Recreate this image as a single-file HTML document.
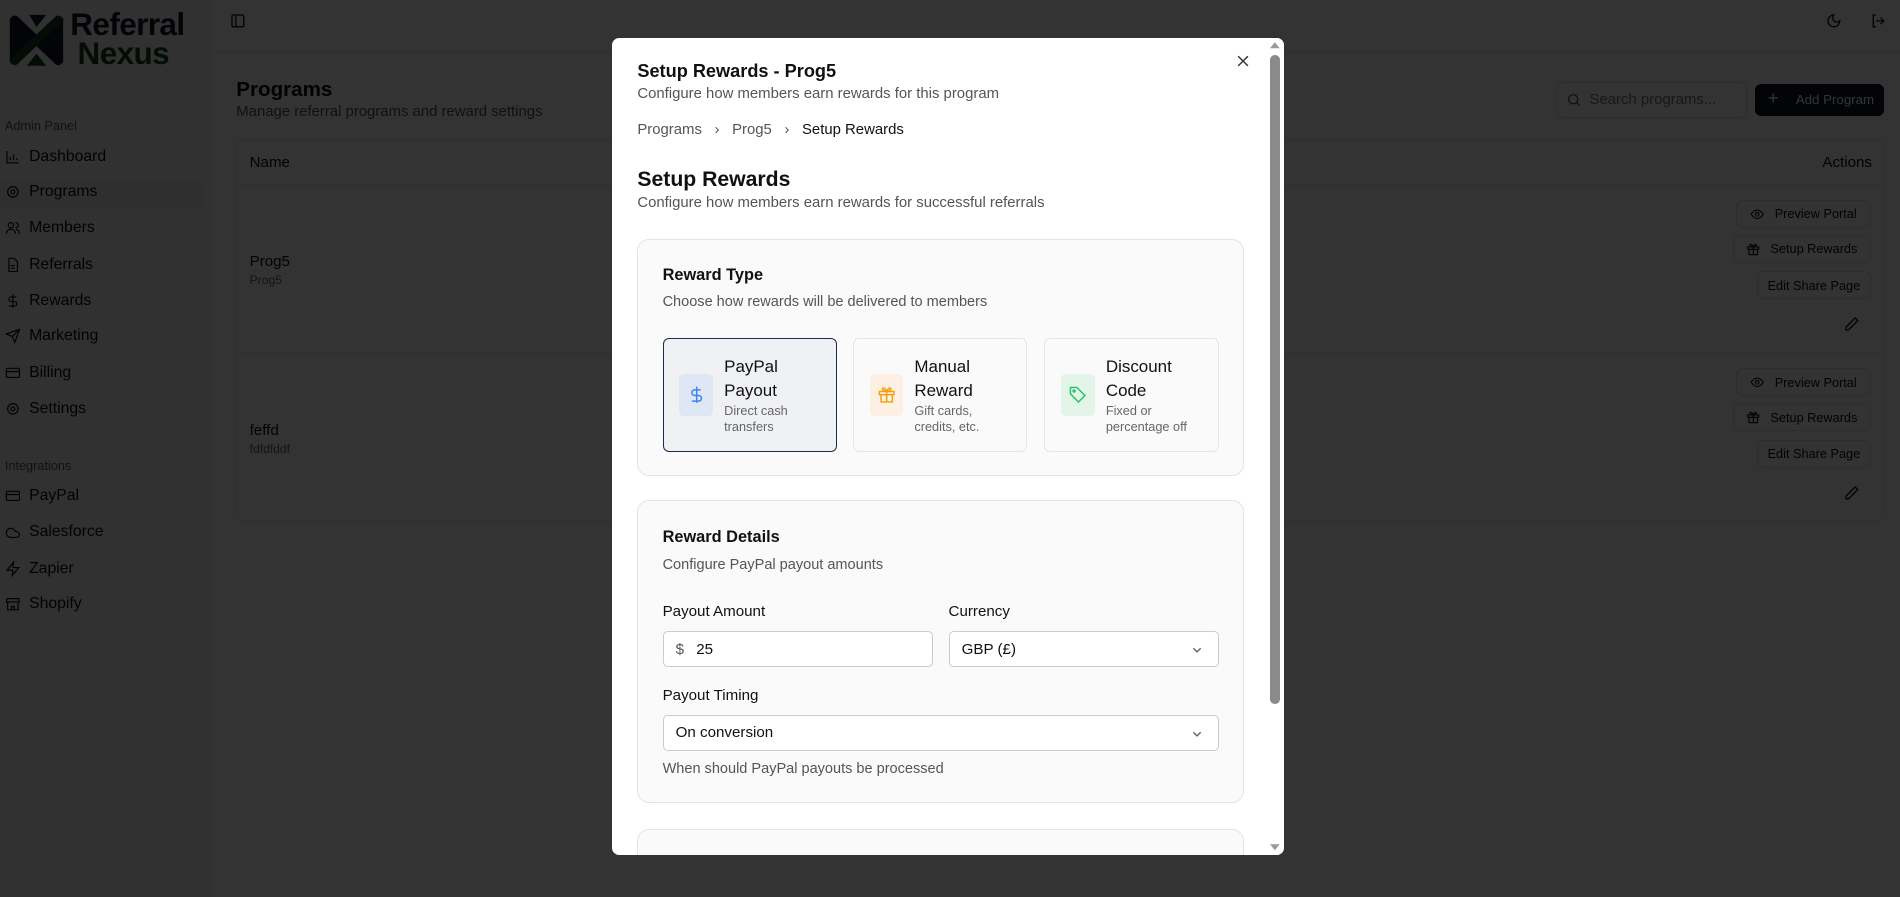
<!DOCTYPE html>
<html><head><meta charset="utf-8">
<meta name="color-scheme" content="only light">
<style>
:root{color-scheme:only light}
*{box-sizing:border-box;margin:0;padding:0}
html,body{width:1900px;height:897px;overflow:hidden;background:#fff}
body{font-family:"Liberation Sans",sans-serif}
#w{zoom:1.2117;width:1568px;height:740px;position:relative;background:#fff;color:#0a0a0a}
.abs{position:absolute}
.side{left:0;top:0;width:175px;height:740px;background:#f6f6f6;border-right:1px solid #ececec}
.nav{position:absolute;left:4px;font-size:13px;color:#0a0a0a;display:flex;align-items:center;gap:7px}
.nav svg{width:13px;height:13px;stroke:#0a0a0a;fill:none;stroke-width:1.8}
.grp{position:absolute;left:4px;font-size:10.5px;color:#555}
.btn{position:absolute;border:1px solid #e2e2e2;border-radius:5px;font-size:10.5px;color:#0a0a0a;display:flex;align-items:center;justify-content:center;gap:8px;height:23px;background:#fff}
.btn svg{width:12px;height:12px;stroke:#0a0a0a;fill:none;stroke-width:1.8}
.ov{left:0;top:0;width:1568px;height:740px;background:rgba(0,0,0,0.8)}
.modal{left:505px;top:31px;width:555px;height:675px;background:#fff;border-radius:6px;overflow:hidden}
.card{position:absolute;left:21px;width:501px;background:#fafafa;border:1px solid #e4e4e4;border-radius:10px}
.opt{position:absolute;top:81px;width:144px;height:94px;border:1px solid #e6e6e6;border-radius:5px;background:#fafafa}
.opt .ic{position:absolute;left:13px;top:29px;width:28px;height:35px;border-radius:4px;display:flex;align-items:center;justify-content:center}
.opt .ic svg{width:16px;height:16px;fill:none;stroke-width:1.8}
.opt .t{position:absolute;left:50px;top:13px;font-size:14px;line-height:20px;color:#111}
.opt .d{position:absolute;left:50px;top:53px;font-size:10.5px;line-height:13.5px;color:#666}
.lbl{position:absolute;font-size:12.5px;color:#111}
.inp{position:absolute;height:30px;border:1px solid #ccc;border-radius:4px;background:#fff;font-size:12.5px;color:#111;display:flex;align-items:center;padding-left:10px}
.chev{position:absolute;right:12px;top:10px;width:10px;height:10px}
</style></head><body><div id="w">

<div class="abs side">
 <svg class="abs" style="left:4px;top:8px" width="52" height="50" viewBox="0 0 52 50">
  <path d="M4 6 L22 24 L4 44 Z" fill="#0b1424"/><path d="M48 6 L30 24 L48 44 Z" fill="#0b1424"/>
  <line x1="8" y1="8" x2="44" y2="42" stroke="#0b1424" stroke-width="7" stroke-linecap="round"/>
  <line x1="44" y1="8" x2="8" y2="42" stroke="#14401c" stroke-width="7" stroke-linecap="round"/>
  <path d="M20 4 L34 4 L26 14Z" fill="#0b1424"/><path d="M18 46 L34 46 L26 36Z" fill="#14401c"/>
 </svg>
 <div class="abs" style="left:58px;top:8px;font-size:26px;font-weight:bold;line-height:24px;color:#0b1424;letter-spacing:-0.5px">Referral</div>
 <div class="abs" style="left:64px;top:32px;font-size:26px;font-weight:bold;line-height:24px;color:#14401c;letter-spacing:-0.5px">Nexus</div>
 <div class="abs" style="left:0;top:78px;width:175px;border-top:1px solid #e8e8e8"></div>
 <div class="grp" style="top:97px">Admin Panel</div>
 <div class="abs" style="left:0;top:148px;width:168px;height:23px;background:#ebebeb;border-radius:5px"></div>
 <div class="nav" style="top:122px"><svg viewBox="0 0 24 24"><path d="M3 3v18h18M8 17v-5M13 17V8M18 17v-3"/></svg>Dashboard</div>
 <div class="nav" style="top:151px"><svg viewBox="0 0 24 24"><circle cx="12" cy="12" r="3"/><circle cx="12" cy="12" r="8"/></svg>Programs</div>
 <div class="nav" style="top:181px"><svg viewBox="0 0 24 24"><circle cx="9" cy="8" r="4"/><path d="M2 21c0-4 3-7 7-7s7 3 7 7M16 4a4 4 0 010 8M22 21c0-3-2-6-5-7"/></svg>Members</div>
 <div class="nav" style="top:211px"><svg viewBox="0 0 24 24"><path d="M6 2h8l5 5v15H6zM9 13h6M9 17h6"/></svg>Referrals</div>
 <div class="nav" style="top:241px"><svg viewBox="0 0 24 24"><path d="M12 2v20M17 6H9.5a3.5 3.5 0 000 7h5a3.5 3.5 0 010 7H6"/></svg>Rewards</div>
 <div class="nav" style="top:270px"><svg viewBox="0 0 24 24"><path d="M22 2L11 13M22 2l-7 20-4-9-9-4z"/></svg>Marketing</div>
 <div class="nav" style="top:300px"><svg viewBox="0 0 24 24"><rect x="2" y="5" width="20" height="14" rx="2"/><path d="M2 10h20"/></svg>Billing</div>
 <div class="nav" style="top:330px"><svg viewBox="0 0 24 24"><circle cx="12" cy="12" r="3"/><circle cx="12" cy="12" r="8"/></svg>Settings</div>
 <div class="grp" style="top:378px">Integrations</div>
 <div class="nav" style="top:402px"><svg viewBox="0 0 24 24"><rect x="2" y="5" width="20" height="14" rx="2"/><path d="M2 10h20"/></svg>PayPal</div>
 <div class="nav" style="top:432px"><svg viewBox="0 0 24 24"><path d="M17.5 19H9a7 7 0 116.7-9h1.8a4.5 4.5 0 010 9z"/></svg>Salesforce</div>
 <div class="nav" style="top:462px"><svg viewBox="0 0 24 24"><path d="M13 2L3 14h9l-1 8 10-12h-9z"/></svg>Zapier</div>
 <div class="nav" style="top:491px"><svg viewBox="0 0 24 24"><path d="M4 9h16v12H4zM3 4h18l1 5H2zM10 21v-5h4v5"/></svg>Shopify</div>
</div>

<div class="abs" style="left:176px;top:43px;width:1392px;border-top:1px solid #ececec"></div>
<svg class="abs" style="left:190px;top:11px" width="13" height="13" viewBox="0 0 24 24" fill="none" stroke="#0a0a0a" stroke-width="2"><rect x="3" y="3" width="18" height="18" rx="2"/><path d="M9 3v18"/></svg>
<svg class="abs" style="left:1507px;top:11px" width="13" height="13" viewBox="0 0 24 24" fill="none" stroke="#0a0a0a" stroke-width="2"><path d="M12 3a6 6 0 009 9 9 9 0 11-9-9z"/></svg>
<svg class="abs" style="left:1543px;top:11px" width="13" height="13" viewBox="0 0 24 24" fill="none" stroke="#0a0a0a" stroke-width="2"><path d="M9 21H5V3h4M16 17l5-5-5-5M21 12H9"/></svg>

<div class="abs" style="left:195px;top:64px;font-size:17px;font-weight:bold;color:#0a0a0a">Programs</div>
<div class="abs" style="left:195px;top:86px;font-size:12.3px;color:#555">Manage referral programs and reward settings</div>
<div class="abs" style="left:1284px;top:68px;width:158px;height:29px;border:1px solid #dcdcdc;border-radius:5px;font-size:12.3px;color:#777;padding:7px 0 0 27px">Search programs...</div>
<svg class="abs" style="left:1292px;top:76px" width="13" height="13" viewBox="0 0 24 24" fill="none" stroke="#555" stroke-width="2"><circle cx="11" cy="11" r="7"/><path d="M21 21l-5-5"/></svg>
<div class="abs" style="left:1448px;top:69px;width:107px;height:27px;background:#0f172a;border-radius:5px;font-size:11px;color:#fff;padding:7px 0 0 34px">Add Program</div>
<div class="abs" style="left:1459px;top:73px;font-size:15px;color:#fff">+</div>

<div class="abs" style="left:195px;top:115px;width:1360px;height:316px;border:1px solid #e6e6e6;border-radius:7px"></div>
<div class="abs" style="left:196px;top:153px;width:1358px;border-top:1px solid #e6e6e6"></div>
<div class="abs" style="left:196px;top:291px;width:1358px;border-top:1px solid #e6e6e6"></div>
<div class="abs" style="left:206px;top:127px;font-size:12.5px;color:#0a0a0a">Name</div>
<div class="abs" style="left:1504px;top:127px;font-size:12.5px;color:#0a0a0a">Actions</div>
<div class="abs" style="left:206px;top:209px;font-size:12.5px;color:#0a0a0a">Prog5</div>
<div class="abs" style="left:206px;top:225px;font-size:10px;color:#666">Prog5</div>
<div class="abs" style="left:206px;top:348px;font-size:12.5px;color:#0a0a0a">feffd</div>
<div class="abs" style="left:206px;top:365px;font-size:10px;color:#666">fdfdfddf</div>

<div class="btn" style="left:1433px;top:165px;width:111px"><svg viewBox="0 0 24 24"><path d="M2 12s4-7 10-7 10 7 10 7-4 7-10 7S2 12 2 12z"/><circle cx="12" cy="12" r="3"/></svg>Preview Portal</div>
<div class="btn" style="left:1430px;top:194px;width:114px"><svg viewBox="0 0 24 24"><rect x="3" y="8" width="18" height="4"/><path d="M12 8v13M5 12v9h14v-9M12 8S10 3 7.5 4 9 8 12 8zM12 8s2-5 4.5-4S15 8 12 8z"/></svg>Setup Rewards</div>
<div class="btn" style="left:1450px;top:224px;width:94px">Edit Share Page</div>
<svg class="abs" style="left:1522px;top:261px" width="13" height="13" viewBox="0 0 24 24" fill="none" stroke="#0a0a0a" stroke-width="2"><path d="M17 3l4 4L7 21H3v-4z"/></svg>
<div class="btn" style="left:1433px;top:304px;width:111px"><svg viewBox="0 0 24 24"><path d="M2 12s4-7 10-7 10 7 10 7-4 7-10 7S2 12 2 12z"/><circle cx="12" cy="12" r="3"/></svg>Preview Portal</div>
<div class="btn" style="left:1430px;top:333px;width:114px"><svg viewBox="0 0 24 24"><rect x="3" y="8" width="18" height="4"/><path d="M12 8v13M5 12v9h14v-9M12 8S10 3 7.5 4 9 8 12 8zM12 8s2-5 4.5-4S15 8 12 8z"/></svg>Setup Rewards</div>
<div class="btn" style="left:1450px;top:363px;width:94px">Edit Share Page</div>
<svg class="abs" style="left:1522px;top:400px" width="13" height="13" viewBox="0 0 24 24" fill="none" stroke="#0a0a0a" stroke-width="2"><path d="M17 3l4 4L7 21H3v-4z"/></svg>

<div class="abs ov"></div>

<div class="abs modal">
 <div class="abs" style="left:21px;top:19px;font-size:15px;font-weight:bold;color:#111">Setup Rewards - Prog5</div>
 <div class="abs" style="left:21px;top:40px;font-size:12.3px;color:#555">Configure how members earn rewards for this program</div>
 <div class="abs" style="left:21px;top:70px;font-size:12.3px;color:#555">Programs <span style="margin:0 7px;color:#555">&#8250;</span> Prog5 <span style="margin:0 7px;color:#555">&#8250;</span> <span style="color:#111">Setup Rewards</span></div>
 <svg class="abs" style="left:516px;top:14px" width="10" height="10" viewBox="0 0 10 10" stroke="#333" stroke-width="1.2"><path d="M1 1l8 8M9 1L1 9"/></svg>
 <div class="abs" style="left:21px;top:108px;font-size:17.5px;font-weight:bold;color:#111">Setup Rewards</div>
 <div class="abs" style="left:21px;top:130px;font-size:12.3px;color:#555">Configure how members earn rewards for successful referrals</div>

 <div class="card" style="top:166px;height:196px">
  <div class="abs" style="left:20px;top:22px;font-size:13.5px;font-weight:bold;color:#111">Reward Type</div>
  <div class="abs" style="left:20px;top:45px;font-size:12px;color:#555">Choose how rewards will be delivered to members</div>
  <div class="opt" style="left:20px;background:#f0f1f4;border-color:#1e2b4d">
   <div class="ic" style="background:#dfe7f5"><svg viewBox="0 0 24 24" stroke="#3b82f6"><path d="M12 2v20M17 6H9.5a3.5 3.5 0 000 7h5a3.5 3.5 0 010 7H6"/></svg></div>
   <div class="t">PayPal<br>Payout</div><div class="d">Direct cash<br>transfers</div></div>
  <div class="opt" style="left:177px">
   <div class="ic" style="background:#fbf0e2"><svg viewBox="0 0 24 24" stroke="#f59e0b"><rect x="3" y="8" width="18" height="4"/><path d="M12 8v13M5 12v9h14v-9M12 8S10 3 7.5 4 9 8 12 8zM12 8s2-5 4.5-4S15 8 12 8z"/></svg></div>
   <div class="t">Manual<br>Reward</div><div class="d">Gift cards,<br>credits, etc.</div></div>
  <div class="opt" style="left:335px">
   <div class="ic" style="background:#e3f5e8"><svg viewBox="0 0 24 24" stroke="#22c55e"><path d="M3 3h8l10 10-8 8L3 11z"/><circle cx="7.5" cy="7.5" r="1.2"/></svg></div>
   <div class="t">Discount<br>Code</div><div class="d">Fixed or<br>percentage off</div></div>
 </div>

 <div class="card" style="top:382px;height:250px">
  <div class="abs" style="left:20px;top:22px;font-size:13.5px;font-weight:bold;color:#111">Reward Details</div>
  <div class="abs" style="left:20px;top:46px;font-size:12px;color:#555">Configure PayPal payout amounts</div>
  <div class="lbl" style="left:20px;top:84px">Payout Amount</div>
  <div class="lbl" style="left:256px;top:84px">Currency</div>
  <div class="inp" style="left:20px;top:107px;width:223px"><span style="color:#555;margin-right:10px">$</span>25</div>
  <div class="inp" style="left:256px;top:107px;width:223px">GBP (£)<svg class="chev" viewBox="0 0 10 10" fill="none" stroke="#666" stroke-width="1.2"><path d="M2 3.5l3 3 3-3"/></svg></div>
  <div class="lbl" style="left:20px;top:153px">Payout Timing</div>
  <div class="inp" style="left:20px;top:176px;width:459px">On conversion<svg class="chev" viewBox="0 0 10 10" fill="none" stroke="#666" stroke-width="1.2"><path d="M2 3.5l3 3 3-3"/></svg></div>
  <div class="abs" style="left:20px;top:214px;font-size:12px;color:#555">When should PayPal payouts be processed</div>
 </div>
 <div class="card" style="top:653px;height:60px"></div>

 <div class="abs" style="left:540px;top:0;width:15px;height:675px;background:#fff"></div>
 <div class="abs" style="left:543px;top:14px;width:8px;height:536px;background:#8a8a8a;border-radius:4px"></div>
 <svg class="abs" style="left:543px;top:3px" width="8" height="7" viewBox="0 0 8 7"><path d="M0 6L4 1 8 6z" fill="#999"/></svg>
 <svg class="abs" style="left:543px;top:665px" width="8" height="7" viewBox="0 0 8 7"><path d="M0 1L4 6 8 1z" fill="#999"/></svg>
</div>

</div></body></html>
